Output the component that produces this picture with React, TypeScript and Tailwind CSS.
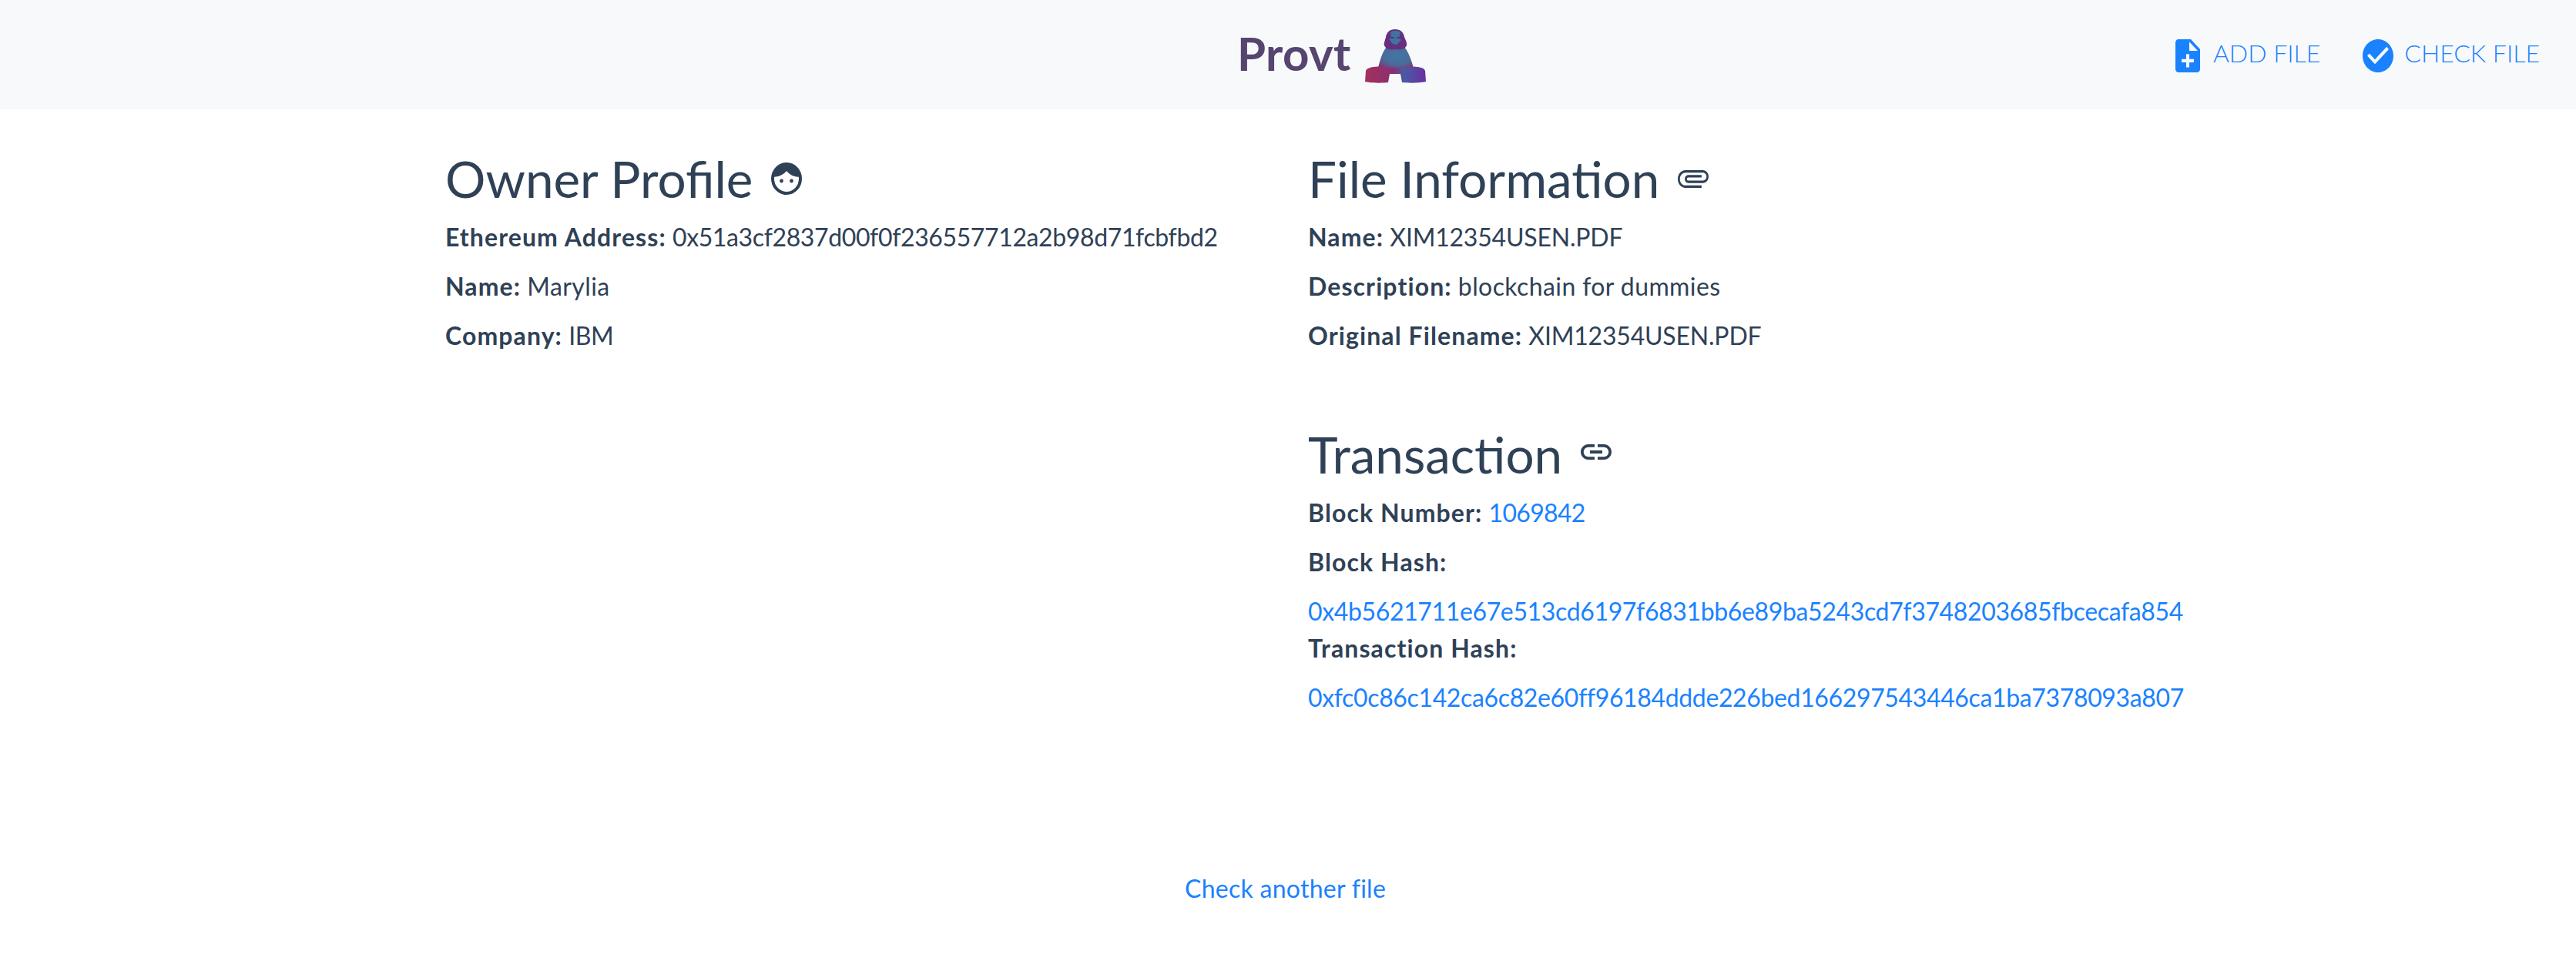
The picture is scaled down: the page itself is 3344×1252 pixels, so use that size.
import React from "react";

const B = ({ children }: { children: React.ReactNode }) => <strong className="font-bold tracking-[1.1px]">{children}</strong>;

const Row = ({ label, value, track }: { label: string; value: string; track: string }) => (
  <p className="mb-4 h-12 leading-[48px] whitespace-nowrap">
    <B>{label}</B> <span className={track}>{value}</span>
  </p>
);

const Logo = () => (
  <svg viewBox="0 0 80 70" className="w-[80px] h-[70px] blur-[0.5px]">
    <defs>
      <linearGradient id="g" x1="0" y1="0.7" x2="1" y2="0.7">
        <stop offset="0" stopColor="#a5305f" />
        <stop offset="0.45" stopColor="#8a2f6e" />
        <stop offset="0.65" stopColor="#4a5aa6" />
        <stop offset="1" stopColor="#6a2f9e" />
      </linearGradient>
      <radialGradient id="h" cx="0.55" cy="0.45" r="0.7">
        <stop offset="0" stopColor="#3f78a2" />
        <stop offset="0.6" stopColor="#4a6a9c" />
        <stop offset="1" stopColor="#8a2f6e" />
      </radialGradient>
    </defs>
    <path d="M0 68L1 54C2 51 6 50 10 49L24 48L29 50L30 46H48L49 50L55 48L69 49C74 50 77 51 78 54L79 68C70 70 56 70 48 69L46 58H32L30 69C22 70 8 70 0 68Z" fill="url(#g)" />
    <path d="M17 50C20 38 23 28 29 22H50C56 28 60 40 63 50Z" fill="url(#h)" />
    <path d="M39 0C46 0 50 4 51 10C53 15 55 18 54 21C52 26 46 27 39 26C33 27 27 26 25 21C24 18 26 15 27 10C28 4 32 0 39 0Z" fill="#682f80" />
    <path d="M33 4C36 1 43 1 46 4L44 11L47 14L41 20L36 19L31 13L34 11Z" fill="#3f74a0" />
    <path d="M33 10h5v2h-5zM41 10h5v2h-5z" fill="#682f80" />
  </svg>
);

export default function App() {
  return (
    <div className="min-h-[1252px] bg-white text-[#2f4156] font-['Lato','Liberation_Sans',sans-serif] text-[32px]">
      <header className="relative h-[142px] bg-[#f8f9fb] flex items-center justify-end pr-[47px] pb-[4px]">
        <div className="absolute left-[1606px] top-[34px] flex items-start">
          <span className="text-[#56456f] text-[60px] font-bold leading-[70px] tracking-[0.4px]">Provt</span>
          <span className="ml-[18px] mt-[4px]"><Logo /></span>
        </div>
        <nav className="flex items-center gap-[55px] text-[#1a82ff] font-light">
          <a className="flex items-center gap-[17px]">
            <svg viewBox="4 2 16 20" preserveAspectRatio="none" className="w-[32px] h-[43px] fill-current mt-[6px]"><path d="M14 2H6c-1.1 0-1.99.9-1.99 2L4 20c0 1.1.89 2 1.99 2H18c1.1 0 2-.9 2-2V8l-6-6zm2 14h-3v3h-2v-3H8v-2h3v-3h2v3h3v2zm-3-7V3.5L18.5 9H13z" /></svg>
            ADD FILE
          </a>
          <a className="flex items-center gap-[14px]">
            <svg viewBox="2 2 20 20" preserveAspectRatio="none" className="w-[40px] h-[43px] fill-current mt-[6px]"><path d="M12 2C6.48 2 2 6.48 2 12s4.48 10 10 10 10-4.48 10-10S17.52 2 12 2zm-2 15l-5-5 1.41-1.41L10 14.17l7.59-7.59L19 8l-9 9z" /></svg>
            CHECK FILE
          </a>
        </nav>
      </header>
      <main className="pl-[578px] pt-[46px] grid grid-cols-[1120px_1fr]">
        <section>
          <h2 className="font-normal text-[65.5px] leading-[88px] flex items-center gap-[24px] mb-[8px]">
            Owner Profile
            <svg viewBox="0 0 40 42" className="w-[40px] h-[42px]">
              <ellipse cx="20" cy="21" rx="18" ry="19" fill="none" stroke="currentColor" strokeWidth="4" />
              <path d="M2 19C4 7 12 1 20 1s16 6 18 18c-8 0-14-3-18-8-4 5-10 8-18 8z" fill="currentColor" />
              <circle cx="13.5" cy="24" r="2.4" fill="currentColor" />
              <circle cx="26.5" cy="24" r="2.4" fill="currentColor" />
            </svg>
          </h2>
          <Row track="tracking-[-0.38px]" label="Ethereum Address:" value="0x51a3cf2837d00f0f236557712a2b98d71fcbfbd2" />
          <Row track="tracking-[0.4px]" label="Name:" value="Marylia" />
          <Row track="tracking-[-0.4px]" label="Company:" value="IBM" />
        </section>
        <section>
          <h2 className="font-normal text-[65.5px] leading-[88px] flex items-center gap-[24px] mb-[8px]">
            File Information
            <svg viewBox="1 7 22 11" preserveAspectRatio="none" className="w-[40px] h-[23px] fill-current"><g transform="rotate(90 12 12)"><path d="M16.5 6v11.5c0 2.21-1.79 4-4 4s-4-1.79-4-4V5c0-1.38 1.12-2.5 2.5-2.5s2.5 1.12 2.5 2.5v10.5c0 .55-.45 1-1 1s-1-.45-1-1V6H10v9.5c0 1.38 1.12 2.5 2.5 2.5s2.5-1.12 2.5-2.5V5c0-2.21-1.79-4-4-4S7 2.79 7 5v12.5c0 3.04 2.46 5.5 5.5 5.5s5.5-2.46 5.5-5.5V6h-1.5z" /></g></svg>
          </h2>
          <Row track="tracking-[-0.2px]" label="Name:" value="XIM12354USEN.PDF" />
          <Row track="tracking-[0.4px]" label="Description:" value="blockchain for dummies" />
          <Row track="tracking-[-0.2px]" label="Original Filename:" value="XIM12354USEN.PDF" />
          <h2 className="mt-[86px] font-normal text-[65.5px] leading-[88px] flex items-center gap-[24px] mb-[8px]">
            Transaction
            <svg viewBox="0 0 24 24" className="w-[48px] h-[48px] fill-current -mx-[4px] -mt-[6px]"><path d="M3.9 12c0-1.71 1.39-3.1 3.1-3.1h4V7H7c-2.76 0-5 2.24-5 5s2.24 5 5 5h4v-1.9H7c-1.71 0-3.1-1.39-3.1-3.1zM8 13h8v-2H8v2zm9-6h-4v1.9h4c1.71 0 3.1 1.39 3.1 3.1s-1.39 3.1-3.1 3.1h-4V17h4c2.76 0 5-2.24 5-5s-2.24-5-5-5z" /></svg>
          </h2>
          <p className="mb-4 leading-[48px] whitespace-nowrap"><B>Block Number:</B> <a className="text-[#1a82ff] tracking-[-0.7px]">1069842</a></p>
          <p className="mb-4 leading-[48px]"><B>Block Hash:</B></p>
          <a className="block leading-[48px] text-[#1a82ff] whitespace-nowrap tracking-[-0.36px]">0x4b5621711e67e513cd6197f6831bb6e89ba5243cd7f3748203685fbcecafa854</a>
          <p className="mb-4 leading-[48px]"><B>Transaction Hash:</B></p>
          <a className="block leading-[48px] text-[#1a82ff] whitespace-nowrap tracking-[-0.36px]">0xfc0c86c142ca6c82e60ff96184ddde226bed166297543446ca1ba7378093a807</a>
        </section>
      </main>
      <div className="mt-[200px] pl-[1538px]">
        <a className="leading-[48px] text-[#1a82ff] tracking-[0.27px]">Check another file</a>
      </div>
    </div>
  );
}
